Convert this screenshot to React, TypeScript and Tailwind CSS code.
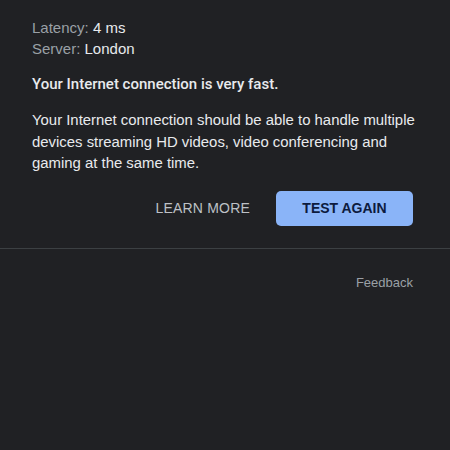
export default function App() {
  return (
    <div className="w-[450px] h-[450px] bg-[#202124] text-[#e8eaed] font-['Liberation_Sans',Arial,sans-serif] overflow-hidden">
      <div className="px-8 pt-[17px]">
        <div className="text-[15px] leading-[21px]">
          <div><span className="text-[#9aa0a6]">Latency: </span>4 ms</div>
          <div><span className="text-[#9aa0a6]">Server: </span>London</div>
        </div>
        <div className="mt-[15px] text-[15px] leading-[21px] font-medium font-['Roboto',Arial,sans-serif]">Your Internet connection is very fast.</div>
        <div className="mt-[15px] text-[14.9px] leading-[21.5px]">
          Your Internet connection should be able to handle multiple devices streaming HD videos, video conferencing and gaming at the same time.
        </div>
        <div className="mt-[16px] flex justify-end items-center gap-[26px] pr-[5px]">
          <button className="text-[14px] text-[#bdc1c6] tracking-[0.2px]">LEARN MORE</button>
          <button className="w-[137px] h-[35px] rounded-[5px] bg-[#8ab4f8] text-[#0d1b3e] text-[14px] font-semibold">TEST AGAIN</button>
        </div>
      </div>
      <div className="mt-[22px] h-px bg-[#3c4043]" />
      <div className="flex justify-end pr-[37px] pt-[24px] text-[13px] text-[#9aa0a6]">Feedback</div>
    </div>
  );
}
